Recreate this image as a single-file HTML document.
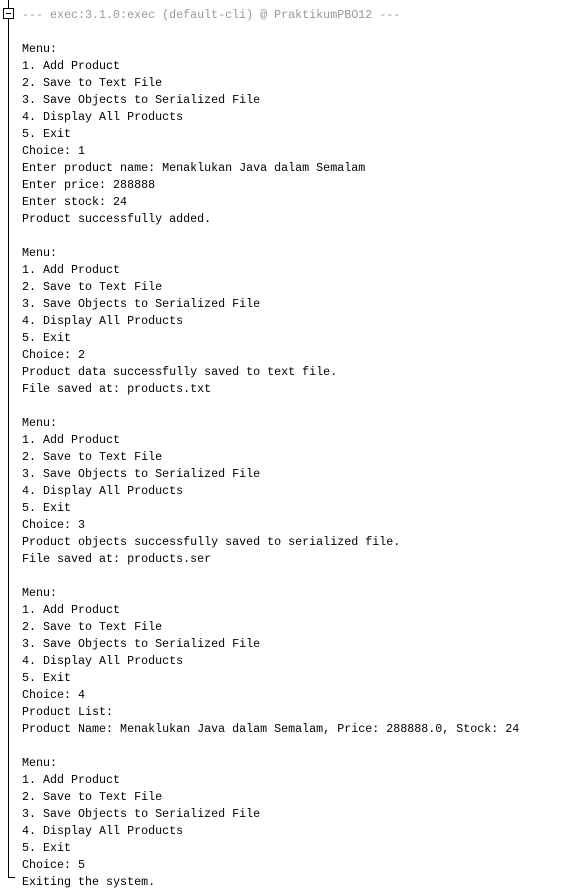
<!DOCTYPE html>
<html><head><meta charset="utf-8"><style>
html,body{margin:0;padding:0;background:#fff;width:563px;height:896px;overflow:hidden}
.vl{position:absolute;left:8px;top:0;width:1px;height:878px;background:#000}
.hl{position:absolute;left:8px;top:877px;width:7px;height:1px;background:#000}
.box{position:absolute;left:3px;top:8px;width:9px;height:9px;border:1px solid #000;background:#fff}
.box:after{content:"";position:absolute;left:2px;top:4px;width:5px;height:1px;background:#000}
pre{position:absolute;left:22px;top:7px;margin:0;font-family:"Liberation Mono",monospace;font-size:11.68px;line-height:17px;color:#000}
.g{color:#999}
</style></head><body>
<div class="vl"></div><div class="hl"></div><div class="box"></div>
<pre><span class="g">--- exec:3.1.0:exec (default-cli) @ PraktikumPBO12 ---</span>

Menu:
1. Add Product
2. Save to Text File
3. Save Objects to Serialized File
4. Display All Products
5. Exit
Choice: 1
Enter product name: Menaklukan Java dalam Semalam
Enter price: 288888
Enter stock: 24
Product successfully added.

Menu:
1. Add Product
2. Save to Text File
3. Save Objects to Serialized File
4. Display All Products
5. Exit
Choice: 2
Product data successfully saved to text file.
File saved at: products.txt

Menu:
1. Add Product
2. Save to Text File
3. Save Objects to Serialized File
4. Display All Products
5. Exit
Choice: 3
Product objects successfully saved to serialized file.
File saved at: products.ser

Menu:
1. Add Product
2. Save to Text File
3. Save Objects to Serialized File
4. Display All Products
5. Exit
Choice: 4
Product List:
Product Name: Menaklukan Java dalam Semalam, Price: 288888.0, Stock: 24

Menu:
1. Add Product
2. Save to Text File
3. Save Objects to Serialized File
4. Display All Products
5. Exit
Choice: 5
Exiting the system.</pre>
</body></html>
